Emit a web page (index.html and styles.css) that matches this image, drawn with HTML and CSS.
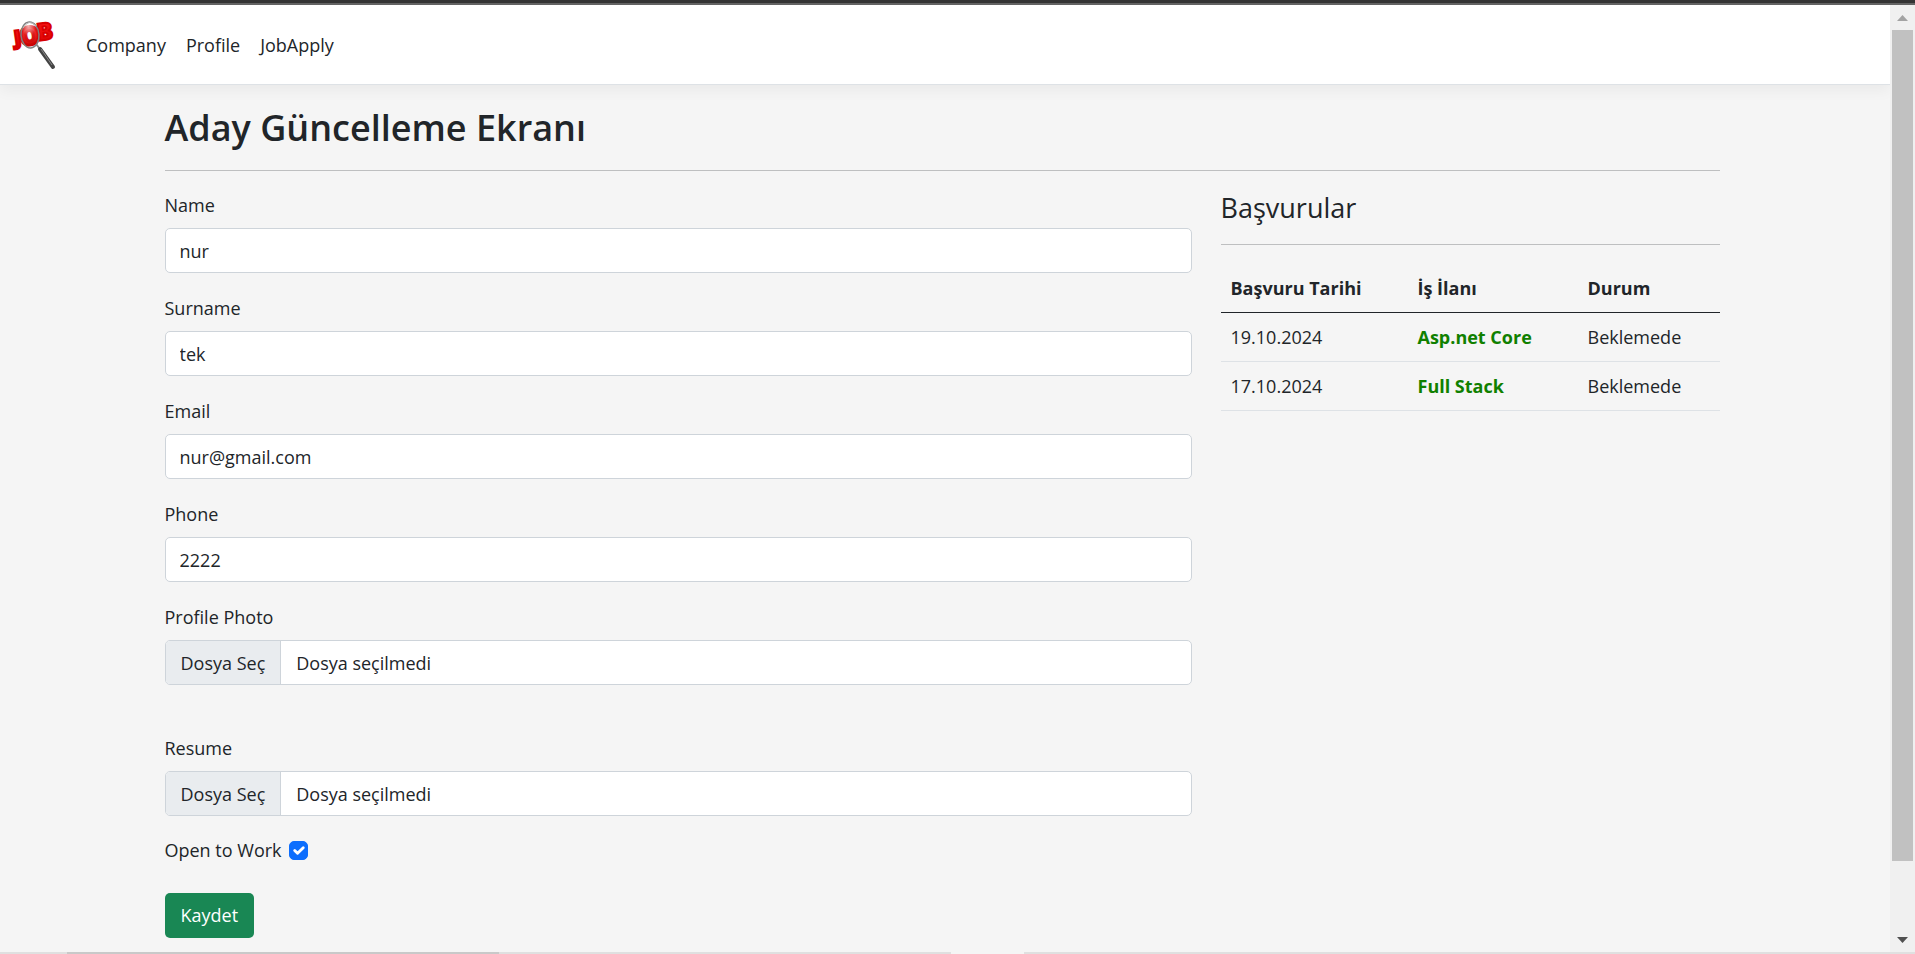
FILE: index.html
```html
<!DOCTYPE html>
<html lang="tr">
<head>
<meta charset="utf-8">
<title>Aday Güncelleme Ekranı</title>
<link rel="stylesheet" href="styles.css">
</head>
<body>
<div class="top-strip"></div>
<div class="viewport">
  <div class="page">
    <header class="navbar">
      <a class="brand" href="#" aria-label="Job">
        <svg width="48" height="79" viewBox="8 5 48 79">
          <defs>
            <linearGradient id="red" x1="0" y1="0" x2="0" y2="1">
              <stop offset="0" stop-color="#ff1a1a"/>
              <stop offset="1" stop-color="#d80000"/>
            </linearGradient>
            <radialGradient id="lens" cx="0.45" cy="0.15" r="0.8">
              <stop offset="0" stop-color="#fff" stop-opacity="0.7"/>
              <stop offset="0.5" stop-color="#fff" stop-opacity="0.1"/>
              <stop offset="1" stop-color="#400" stop-opacity="0.1"/>
            </radialGradient>
          </defs>
          <g font-family="Open Sans, sans-serif" font-weight="800" fill="url(#red)" stroke="#d80000" stroke-width="2">
            <text x="15" y="45" font-size="20" transform="rotate(-8 15 45)">J</text>
            <text x="38" y="41" font-size="24" transform="rotate(-8 38 41)">B</text>
            <text x="21" y="46" font-size="25" stroke-width="3" transform="rotate(-8 21 46)">O</text>
          </g>
          <ellipse cx="30" cy="35" rx="9" ry="13" fill="url(#lens)" stroke="#808080" stroke-width="1.500" transform="rotate(-4 30 35)"/>
          <path d="M23 28Q29 18 36 26" fill="none" stroke="#bbb" stroke-width="1"/>
          <path d="M36 44L40 49" stroke="#888" stroke-width="2"/>
          <path d="M40 49L53 67" stroke="#444" stroke-width="4" stroke-linecap="round"/>
          <path d="M41 49L52 65" stroke="#888" stroke-width="1"/>
        </svg>
      </a>
      <nav class="links">
        <a href="#">Company</a>
        <a href="#">Profile</a>
        <a href="#">JobApply</a>
      </nav>
    </header>
    <main class="container">
      <h1>Aday Güncelleme Ekranı</h1>
      <hr>
      <div class="row">
        <form class="profile">
          <div class="field">
            <label for="name">Name</label>
            <input class="control" id="name" type="text" value="nur">
          </div>
          <div class="field">
            <label for="surname">Surname</label>
            <input class="control" id="surname" type="text" value="tek">
          </div>
          <div class="field">
            <label for="email">Email</label>
            <input class="control" id="email" type="email" value="nur@gmail.com">
          </div>
          <div class="field">
            <label for="phone">Phone</label>
            <input class="control" id="phone" type="text" value="2222">
          </div>
          <div class="field photo">
            <label for="photo">Profile Photo</label>
            <div class="file">
              <span class="file-button">Dosya Seç</span>
              <span class="file-name">Dosya seçilmedi</span>
              <input id="photo" type="file">
            </div>
          </div>
          <div class="field">
            <label for="resume">Resume</label>
            <div class="file">
              <span class="file-button">Dosya Seç</span>
              <span class="file-name">Dosya seçilmedi</span>
              <input id="resume" type="file">
            </div>
          </div>
          <div class="check">
            <label for="open">Open to Work</label>
            <span class="tick">
              <input id="open" type="checkbox" checked>
              <svg viewBox="0 0 20 20"><path d="M6 10l3 3 6-6" fill="none" stroke="#fff" stroke-width="3" stroke-linecap="round" stroke-linejoin="round"/></svg>
            </span>
          </div>
          <button class="save" type="submit">Kaydet</button>
        </form>
        <section class="applications">
          <h2>Başvurular</h2>
          <hr>
          <table>
            <thead>
              <tr><th class="date">Başvuru Tarihi</th><th class="job">İş İlanı</th><th>Durum</th></tr>
            </thead>
            <tbody>
              <tr><td>19.10.2024</td><td><a href="#">Asp.net Core</a></td><td>Beklemede</td></tr>
              <tr><td>17.10.2024</td><td><a href="#">Full Stack</a></td><td>Beklemede</td></tr>
            </tbody>
          </table>
        </section>
      </div>
    </main>
  </div>
  <div class="scrollbar">
    <svg width="25" height="25" viewBox="0 0 25 25"><path d="M7 16L12.500 10L18 16Z" fill="#a3a3a3"/></svg>
    <div class="track"><div class="thumb"></div></div>
    <svg width="25" height="25" viewBox="0 0 25 25"><path d="M7 10L12.500 16L18 10Z" fill="#505050"/></svg>
  </div>
</div>
<div class="bottom-strip"><span class="dark"></span><span class="light"></span></div>
</body>
</html>
```
FILE: styles.css
```css
* { box-sizing: border-box; }
body {
  margin: 0;
  min-height: 100vh;
  display: flex;
  flex-direction: column;
  background: #f5f5f5;
  color: #212529;
  font: 18px/29px "Segoe UI", "Open Sans", sans-serif;
}
.top-strip {
  height: 5px;
  background: #343434;
  border-bottom: 2px solid #636363;
}
.viewport { flex: 1; display: flex; }
.page { flex: 1; overflow: hidden; }
.navbar {
  display: flex;
  align-items: center;
  gap: 30px;
  height: 80px;
  padding: 0 8px;
  background: #fff;
  border-bottom: 1px solid #dee2e6;
  box-shadow: 0 5px 14px rgba(0, 0, 0, 0.05);
}
.brand svg { display: block; }
.links { display: flex; gap: 20px; padding-top: 2px; }
.links a { color: #212529; text-decoration: none; }
.container {
  max-width: 1589px;
  margin: 0 auto;
  padding: 20px 20px 0 14px;
}
h1, h2 { margin: 0; font-weight: 600; }
h1 { font-size: 36px; line-height: 46px; }
h2 { font-size: 27px; line-height: 35px; font-weight: 500; }
hr {
  margin: 19px 0;
  border: 0;
  border-top: 1px solid #bebfc0;
}
.row {
  display: grid;
  grid-template-columns: repeat(12, 1fr);
  column-gap: 29px;
}
.profile { grid-column: span 8; }
.applications { grid-column: span 4; }
.field { margin-bottom: 20px; }
.field label {
  display: block;
  margin-bottom: 7px;
  line-height: 31px;
}
.photo { margin-bottom: 48px; }
.control, .file {
  width: 100%;
  height: 45px;
  border: 1px solid #ced4da;
  border-radius: 5px;
  background: #fff;
}
.control {
  display: block;
  padding: 0 14px;
  color: inherit;
  font: inherit;
}
.file {
  position: relative;
  display: flex;
  align-items: stretch;
  overflow: hidden;
  line-height: 45px;
}
.file-button {
  padding: 0 15px;
  background: #e9ecef;
  border-right: 1px solid #ced4da;
}
.file-name { padding: 0 15px; }
.file input {
  position: absolute;
  inset: 0;
  width: 100%;
  opacity: 0;
}
.check {
  display: flex;
  align-items: center;
  gap: 7px;
  margin-bottom: 28px;
}
.tick { position: relative; width: 19px; height: 19px; }
.tick input {
  display: block;
  appearance: none;
  width: 19px;
  height: 19px;
  margin: 0;
  border: 1px solid #0d6efd;
  border-radius: 5px;
  background: #0d6efd;
}
.tick svg {
  position: absolute;
  inset: 0;
  pointer-events: none;
}
.save {
  height: 45px;
  padding: 0 16px;
  border: 0;
  border-radius: 5px;
  background: #198754;
  color: #fff;
  font: inherit;
}
table {
  width: 100%;
  table-layout: fixed;
  border-spacing: 0;
}
th, td {
  height: 49px;
  padding: 0 10px;
  text-align: left;
  border-bottom: 1px solid #dee2e6;
}
th { font-weight: 700; border-color: #212529; }
td a { color: #108000; font-weight: 700; text-decoration: none; }
.date { width: 187px; }
.job { width: 170px; }
.scrollbar {
  display: flex;
  flex-direction: column;
  width: 25px;
  background: #f0f0f0;
}
.track {
  flex: 1;
  display: grid;
  grid-template-rows: 25fr 2fr;
  padding: 0 2px;
}
.thumb { background: #c1c1c1; }
.bottom-strip {
  display: grid;
  grid-template-columns: 432fr 452fr 73fr 891fr;
  height: 2px;
  background: #e0e0e0;
  padding-left: 67px;
}
.dark { background: #c9c9c9; }
.light { grid-column: 3; background: #f5f5f5; }
```
